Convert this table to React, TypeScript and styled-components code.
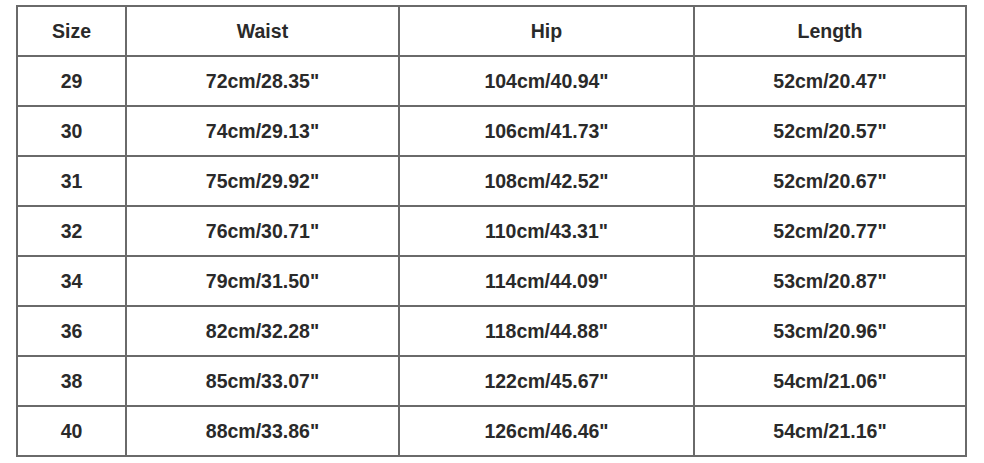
import styled, { createGlobalStyle } from 'styled-components';

const GlobalStyle = createGlobalStyle`
  html, body {
    margin: 0;
    background: #ffffff;
  }
  body {
    font-family: "Liberation Sans", Arial, sans-serif;
  }
`;

const headers = ['Size', 'Waist', 'Hip', 'Length'];

const rows = [
  ['29', '72cm/28.35"', '104cm/40.94"', '52cm/20.47"'],
  ['30', '74cm/29.13"', '106cm/41.73"', '52cm/20.57"'],
  ['31', '75cm/29.92"', '108cm/42.52"', '52cm/20.67"'],
  ['32', '76cm/30.71"', '110cm/43.31"', '52cm/20.77"'],
  ['34', '79cm/31.50"', '114cm/44.09"', '53cm/20.87"'],
  ['36', '82cm/32.28"', '118cm/44.88"', '53cm/20.96"'],
  ['38', '85cm/33.07"', '122cm/45.67"', '54cm/21.06"'],
  ['40', '88cm/33.86"', '126cm/46.46"', '54cm/21.16"'],
];

const Page = styled.div`
  padding: 5px 0 0 16px;
`;

const Grid = styled.div`
  display: grid;
  grid-template-columns: 107px 271px 293px 270px;
  grid-auto-rows: 48px;
  gap: 2px;
  padding: 2px;
  width: max-content;
  background: #6a6a6a;
`;

const Cell = styled.div`
  display: flex;
  align-items: center;
  justify-content: center;
  background: #ffffff;
  color: #2a2a2a;
  font-size: 19.5px;
  font-weight: 700;
`;

function App() {
  return (
    <>
      <GlobalStyle />
      <Page>
        <Grid>
          {headers.map((h) => (
            <Cell key={h}>{h}</Cell>
          ))}
          {rows.map((r) =>
            r.map((v, i) => <Cell key={r[0] + i}>{v}</Cell>)
          )}
        </Grid>
      </Page>
    </>
  );
}

export default App;
